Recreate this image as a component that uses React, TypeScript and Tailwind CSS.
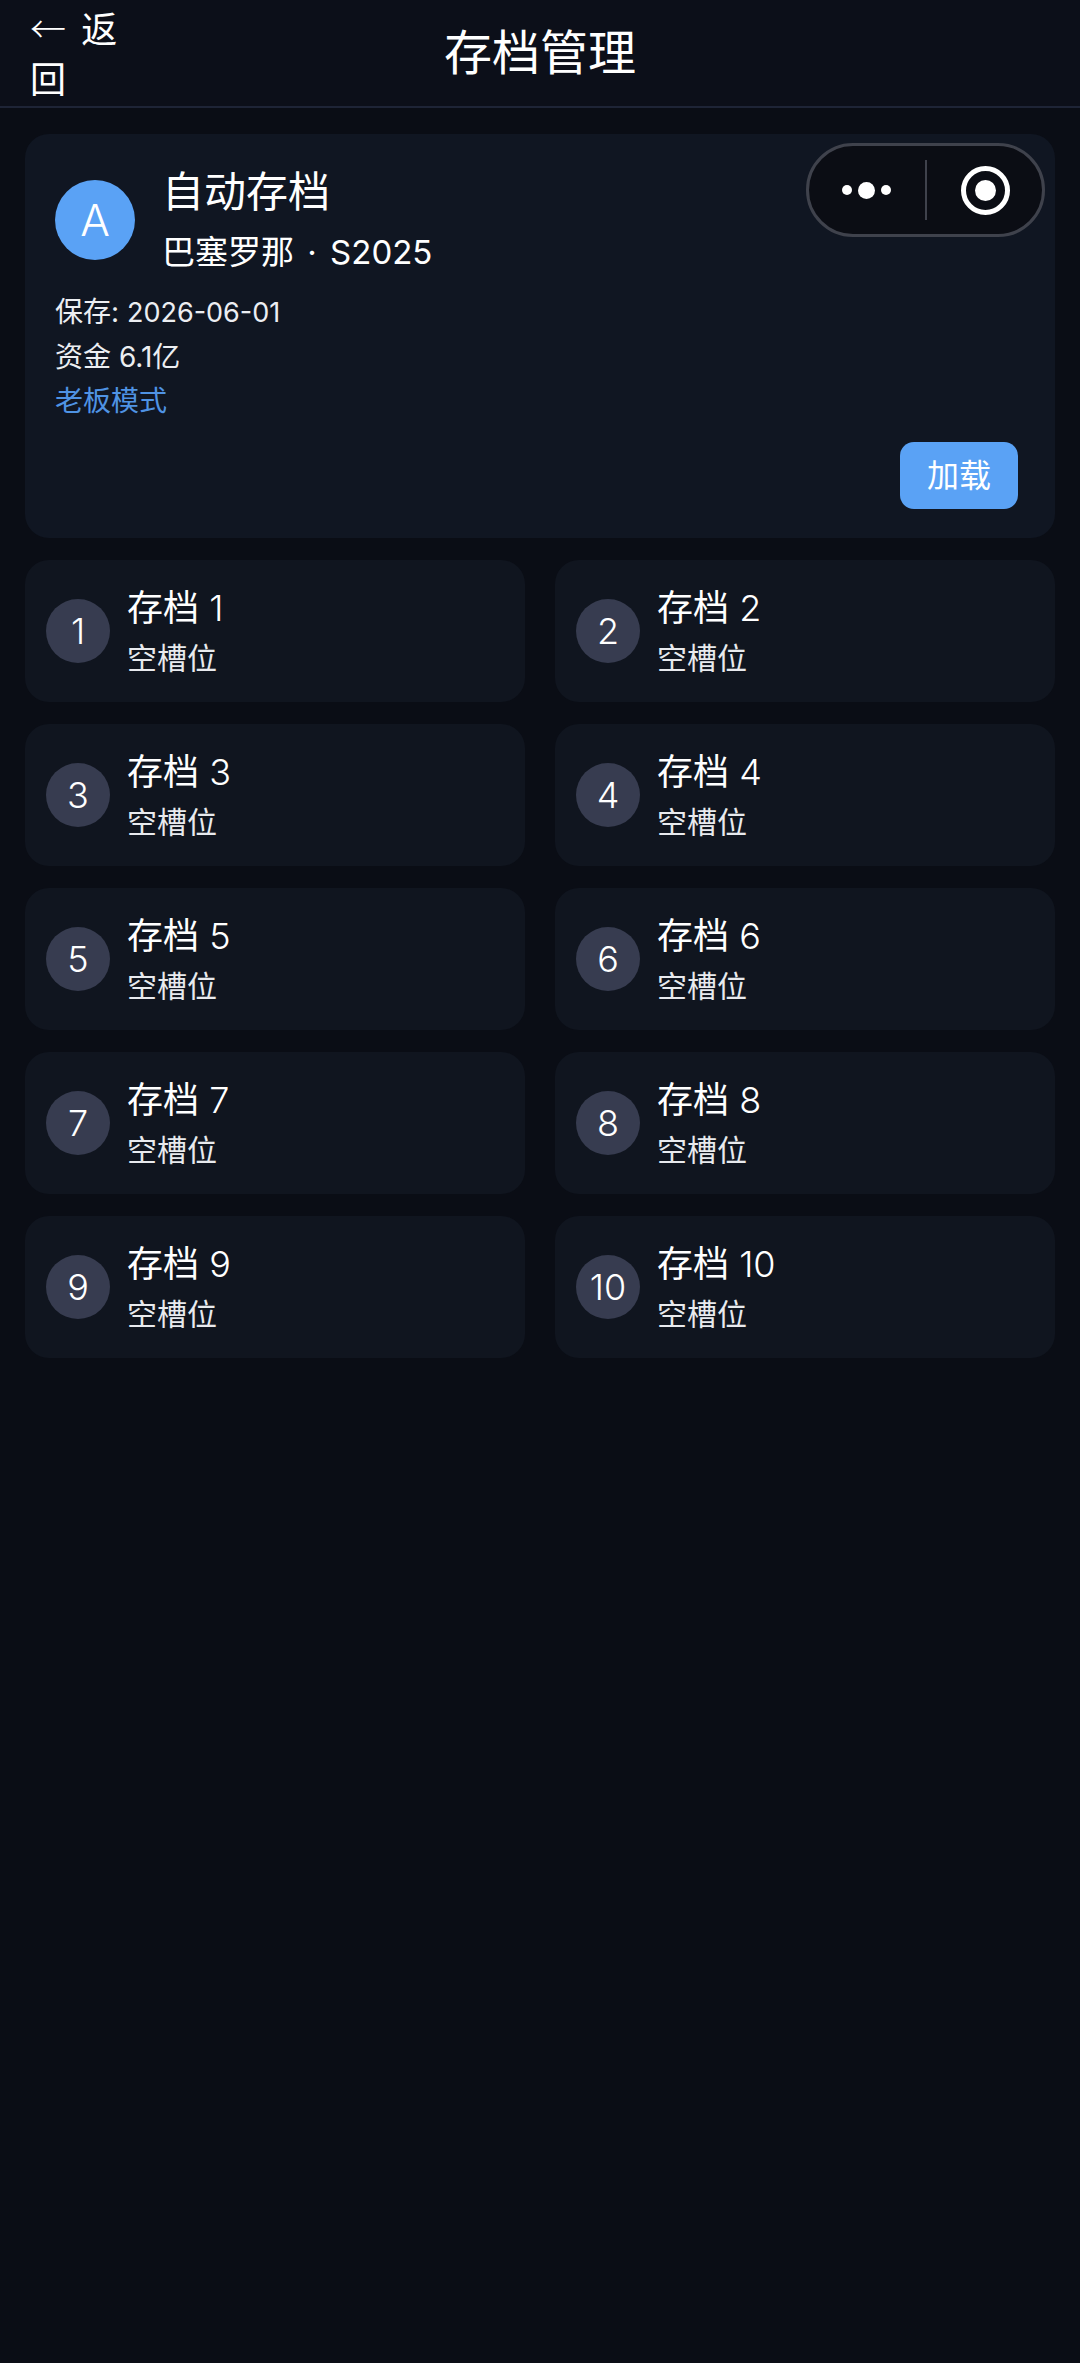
const slots = [1, 2, 3, 4, 5, 6, 7, 8, 9, 10];

function Capsule() {
  return (
    <div className="absolute right-[35px] top-[143px] flex h-[94px] w-[239px] items-center rounded-full border-[3px] border-[#3f424c] bg-[#0b0d14]">
      <div className="flex w-[116px] items-center justify-center gap-[6px] pr-[2px]">
        <span className="h-[10px] w-[10px] rounded-full bg-white" />
        <span className="h-[17px] w-[17px] rounded-full bg-white" />
        <span className="h-[10px] w-[10px] rounded-full bg-white" />
      </div>
      <div className="h-[60px] w-[2px] bg-[#3f424c]" />
      <div className="flex flex-1 items-center justify-center pl-[2px]">
        <div className="flex h-[49px] w-[49px] items-center justify-center rounded-full border-[5px] border-white">
          <span className="h-[21px] w-[21px] rounded-full bg-white" />
        </div>
      </div>
    </div>
  );
}

function SlotCard({ n }: { n: number }) {
  return (
    <div className="flex h-[142px] items-center gap-[17px] rounded-[24px] bg-[#10151f] px-[21px]">
      <div className="flex h-[64px] w-[64px] shrink-0 items-center justify-center rounded-full bg-[#373c50] text-[36px] font-light text-white">
        {n}
      </div>
      <div className="-mt-[1px]">
        <div className="text-[36px] leading-[50px] text-white">
          存档 <span className="font-light">{n}</span>
        </div>
        <div className="mt-[4px] text-[30px] leading-[42px] text-[#e8eaee]">空槽位</div>
      </div>
    </div>
  );
}

export default function App() {
  return (
    <div
      className="relative h-[2363px] w-[1080px] overflow-hidden bg-[#0a0d15] text-white"
      style={{ fontFamily: '"Inter", "Noto Sans CJK SC", sans-serif' }}
    >
      <header className="flex h-[108px] items-center border-b-[2px] border-[#1e2436] bg-[#0c0f19] px-[30px]">
        <button type="button" className="w-[96px] text-left text-[36px] leading-[50px]">
          <span className="mr-[5px] font-['Noto_Sans_CJK_SC'] font-light">←</span> 返回
        </button>
        <h1 className="flex-1 pr-[96px] text-center text-[48px] font-normal">存档管理</h1>
      </header>

      <main className="px-[25px] pt-[26px]">
        <section className="h-[404px] rounded-[24px] bg-[#101622] pt-[26px] pr-[37px] pl-[30px]">
          <div className="flex items-center gap-[27px]">
            <div className="flex h-[80px] w-[80px] items-center justify-center rounded-full bg-[#5aa2f5] text-[44px] font-light">
              A
            </div>
            <div>
              <div className="text-[42px] leading-[64px]">自动存档</div>
              <div className="text-[33px] leading-[56px]">
                巴塞罗那 <span className="mx-[4px]">·</span> S2025
              </div>
            </div>
          </div>
          <div className="mt-[10px] text-[28px] leading-[44px] text-[#eceef2]">
            <div>
              保存: <span className="text-[27px]">2026-06-01</span>
            </div>
            <div>资金 6.1亿</div>
            <div className="text-[#4f93e4]">老板模式</div>
          </div>
          <div className="mt-[19px] flex justify-end">
            <button
              type="button"
              className="h-[67px] w-[118px] rounded-[14px] bg-[#5aa2f5] text-[32px] text-white"
            >
              加载
            </button>
          </div>
        </section>

        <div className="mt-[22px] grid grid-cols-2 gap-x-[30px] gap-y-[22px]">
          {slots.map((n) => (
            <SlotCard key={n} n={n} />
          ))}
        </div>
      </main>

      <Capsule />
    </div>
  );
}
